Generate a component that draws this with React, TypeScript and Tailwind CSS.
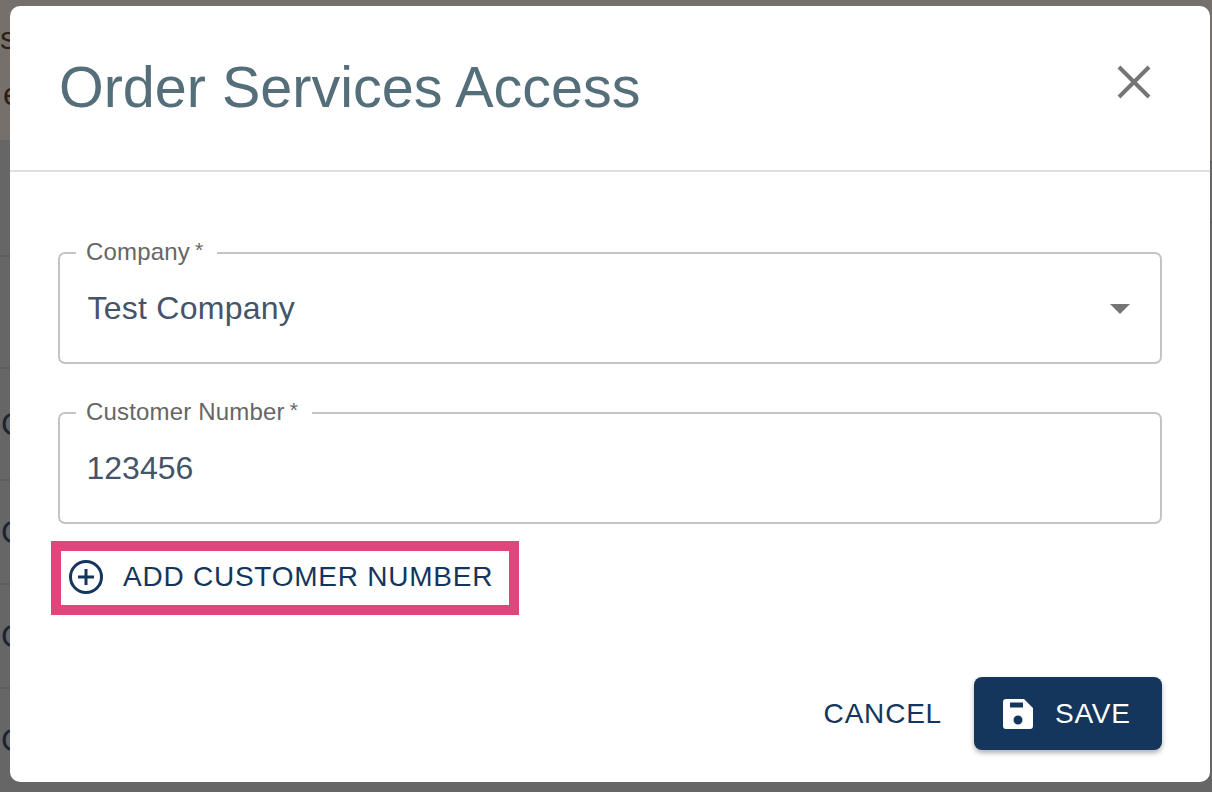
const rows = [
  { height: "h-[112px]", text: "" },
  { height: "h-[112px]", text: "C" },
  { height: "h-[104px]", text: "C" },
  { height: "h-[104px]", text: "C" },
  { height: "h-[104px]", text: "C" },
];

function OutlinedField({ label, value, select }: { label: string; value: string; select?: boolean }) {
  return (
    <div className="relative h-[112px] rounded-[7px] border-2 border-[#c4c4c4] flex items-center justify-between pl-[27.5px] pr-[30px]">
      <span className="absolute -top-[16px] left-[16px] bg-white pl-[10px] pr-[14px] text-[24px] leading-[28px] tracking-[0.18px] text-[#666666] whitespace-nowrap flex items-start">
        {label}
        <span className="ml-[5px] text-[21px] leading-[24px]">*</span>
      </span>
      <span className={`text-[32px] leading-[36px] text-[#44546a] pb-[1px] ${select ? "tracking-[0.25px]" : "-ml-[1px] tracking-[0px]"}`}>
        {value}
      </span>
      {select && (
        <svg width="20" height="10" viewBox="0 0 20 10" className="mt-[1px]">
          <path d="M0 0h20L10 10z" fill="#757575" />
        </svg>
      )}
    </div>
  );
}

export default function App() {
  return (
    <div className="relative h-[792px] w-[1212px] overflow-hidden bg-[#666666] font-['Liberation_Sans',Arial,sans-serif] flex">
      <div className="flex-1">
        <div className="h-[140px] bg-[#76706c] text-[#2e1f14] text-[32px] leading-[40px]">
          <div className="pt-[18px]">s</div>
          <div className="pt-[16px] pl-[3px]">e</div>
        </div>
        <div className="h-[115px]" />
        {rows.map((row, i) => (
          <div key={i} className={`${row.height} border-t-2 border-[#5c5c5c] flex items-center pl-[1px] text-[32px] text-[#1a2530]`}>
            {row.text}
          </div>
        ))}
      </div>
      <div className="w-[6px]">
        <div className="h-[163px] bg-[#76706c] border-b-2 border-[#5c5c5c]" />
        <div className="h-[60px] border-b-2 border-[#5c5c5c]" />
      </div>

      <div className="absolute left-[10px] top-[6px] h-[776px] w-[1200px] rounded-[10px] bg-white flex flex-col">
        <div className="h-[166px] border-b-2 border-[#e0e0e0] flex items-center justify-between pl-[49px] pr-[59px]">
          <h1 className="text-[57.5px] leading-[64px] text-[#546e7a] pb-[3px] whitespace-nowrap">Order Services Access</h1>
          <svg width="34" height="34" viewBox="0 0 34 34" className="mb-[13px]">
            <path d="M2 2l30 30M32 2L2 32" stroke="#757575" strokeWidth="4" />
          </svg>
        </div>

        <div className="flex-1 flex flex-col px-[48px] pt-[80px]">
          <div className="flex flex-col gap-[48px]">
            <OutlinedField label="Company" value="Test Company" select />
            <OutlinedField label="Customer Number" value="123456" />
          </div>

          <div className="mt-[17px] -ml-[7px] w-[468px] h-[74px] border-[10px] border-[#e4447c] flex items-center gap-[20px] pl-[8px] pb-[3px]">
            <svg width="34" height="34" viewBox="0 0 34 34" fill="none" stroke="#14365c" strokeWidth="3">
              <circle cx="17" cy="17" r="15.5" />
              <path d="M17 9v16M9 17h16" />
            </svg>
            <span className="text-[28px] tracking-[0.76px] text-[#14365c] whitespace-nowrap">ADD CUSTOMER NUMBER</span>
          </div>

          <div className="mt-[62px] flex justify-end items-center gap-[32px]">
            <span className="text-[28px] tracking-[0.8px] text-[#14365c]">CANCEL</span>
            <button className="h-[73px] w-[188px] rounded-[8px] bg-[#14365c] text-white text-[28px] tracking-[0.8px] flex items-center gap-[22px] pl-[29px] shadow-[0_3px_5px_rgba(0,0,0,0.3)]">
              <svg width="30" height="30" viewBox="0 0 30 30" fill="#ffffff">
                <path
                  fillRule="evenodd"
                  d="M3 0h18l9 9v18a3 3 0 0 1-3 3H3a3 3 0 0 1-3-3V3a3 3 0 0 1 3-3zM7 3.5v5h13v-5zM15 16.5a4.5 4.5 0 1 0 0 9 4.5 4.5 0 0 0 0-9z"
                />
              </svg>
              <span>SAVE</span>
            </button>
          </div>
        </div>
      </div>
    </div>
  );
}
